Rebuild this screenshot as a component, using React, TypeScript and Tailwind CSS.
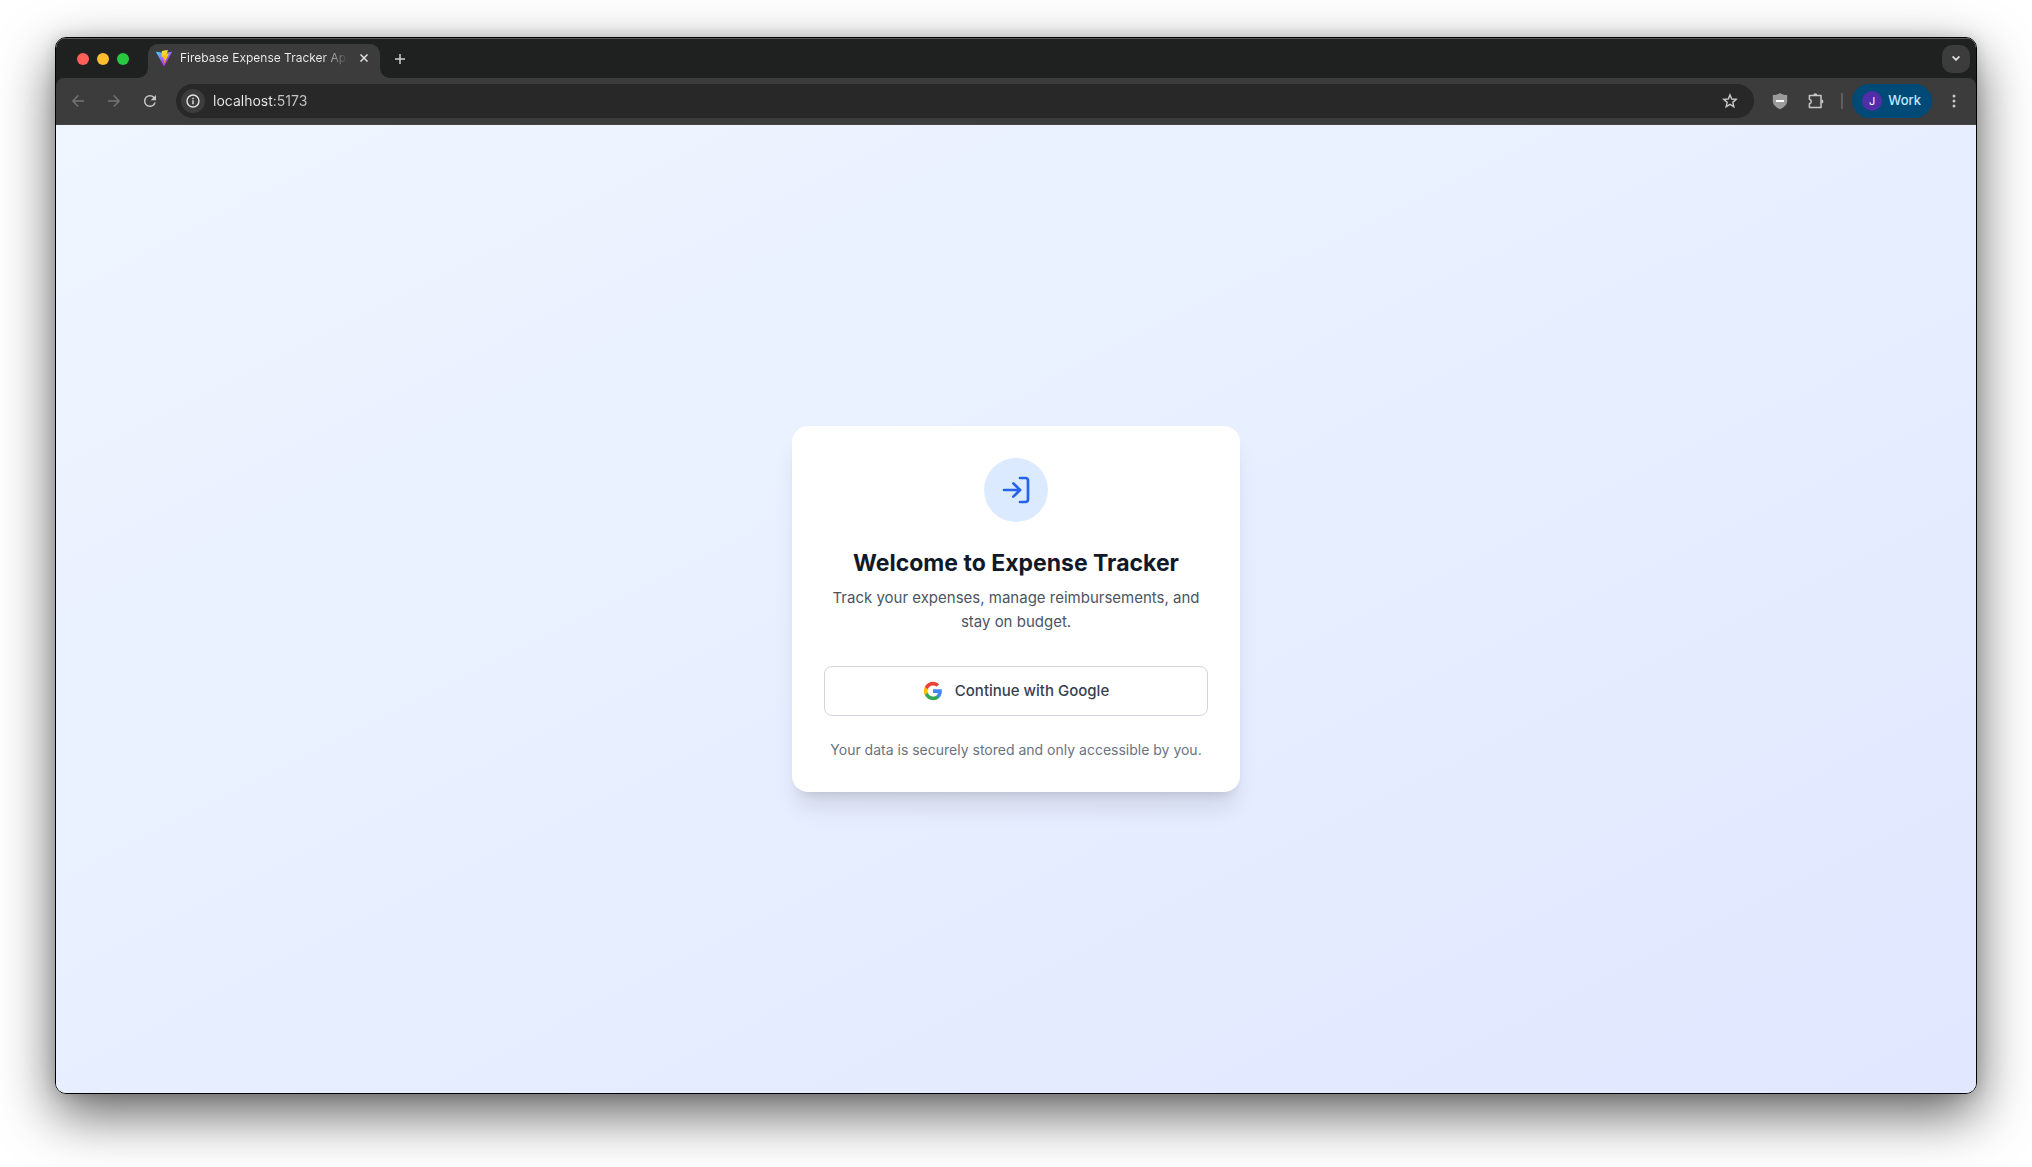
import type { ReactNode } from "react";

function ViteLogo() {
  return (
    <svg viewBox="0 0 256 257" className="size-4 shrink-0" aria-hidden="true">
      <defs>
        <linearGradient id="vite-body" x1="-.828%" x2="57.636%" y1="7.652%" y2="78.411%">
          <stop offset="0%" stopColor="#41D1FF" />
          <stop offset="100%" stopColor="#BD34FE" />
        </linearGradient>
        <linearGradient id="vite-bolt" x1="43.376%" x2="50.316%" y1="2.242%" y2="89.03%">
          <stop offset="0%" stopColor="#FFEA83" />
          <stop offset="8.333%" stopColor="#FFDD35" />
          <stop offset="100%" stopColor="#FFA800" />
        </linearGradient>
      </defs>
      <path
        fill="url(#vite-body)"
        d="M255.153 37.938L134.897 252.976c-2.483 4.44-8.862 4.466-11.382.048L.875 37.958c-2.746-4.814 1.371-10.646 6.827-9.67l120.385 21.517a6.537 6.537 0 0 0 2.322-.004l117.867-21.483c5.438-.991 9.574 4.796 6.877 9.62Z"
      />
      <path
        fill="url(#vite-bolt)"
        d="M185.432.063L96.44 17.501a3.268 3.268 0 0 0-2.634 3.014l-5.474 92.456a3.268 3.268 0 0 0 3.997 3.378l24.777-5.718c2.318-.535 4.413 1.507 3.936 3.838l-7.361 36.047c-.495 2.426 1.782 4.5 4.151 3.78l15.304-4.649c2.372-.72 4.652 1.36 4.15 3.788l-11.698 56.621c-.732 3.542 3.979 5.473 5.943 2.437l1.313-2.028l72.516-144.72c1.215-2.423-.88-5.186-3.54-4.672l-25.505 4.922c-2.396.462-4.435-1.77-3.759-4.114l16.646-57.705c.677-2.35-1.37-4.583-3.769-4.113Z"
      />
    </svg>
  );
}

function GoogleLogo() {
  return (
    <svg viewBox="0 0 24 24" className="size-5 shrink-0" aria-hidden="true">
      <path fill="#4285F4" d="M22.56 12.25c0-.78-.07-1.53-.2-2.25H12v4.26h5.92c-.26 1.37-1.04 2.53-2.21 3.31v2.77h3.57c2.08-1.92 3.28-4.74 3.28-8.09z" />
      <path fill="#34A853" d="M12 23c2.97 0 5.46-.98 7.28-2.66l-3.57-2.77c-.98.66-2.23 1.06-3.71 1.06-2.86 0-5.29-1.93-6.16-4.53H2.18v2.84C3.99 20.53 7.7 23 12 23z" />
      <path fill="#FBBC05" d="M5.84 14.09c-.22-.66-.35-1.36-.35-2.09s.13-1.43.35-2.09V7.07H2.18C1.43 8.55 1 10.22 1 12s.43 3.45 1.18 4.93l2.85-2.22.81-.62z" />
      <path fill="#EA4335" d="M12 5.38c1.62 0 3.06.56 4.21 1.64l3.15-3.15C17.45 2.09 14.97 1 12 1 7.7 1 3.99 3.47 2.18 7.07l3.66 2.84c.87-2.6 3.3-4.53 6.16-4.53z" />
    </svg>
  );
}

function IconButton({ label, className = "", children }: { label: string; className?: string; children: ReactNode }) {
  return (
    <button type="button" aria-label={label} className={`flex size-7 shrink-0 items-center justify-center rounded-full ${className}`}>
      {children}
    </button>
  );
}

function TabStrip() {
  return (
    <div className="flex h-10 items-end border-t border-[#5a5c5b] bg-[#1f2120] pr-1.5">
      <div className="flex h-[39px] w-[92px] shrink-0 items-center gap-2 pl-[21px]">
        <button type="button" aria-label="Close window" className="size-3 rounded-full bg-[#ff5f57]" />
        <button type="button" aria-label="Minimize window" className="size-3 rounded-full bg-[#febc2e]" />
        <button type="button" aria-label="Zoom window" className="size-3 rounded-full bg-[#28c840]" />
      </div>
      <div className="relative flex h-[34px] w-[232px] shrink-0 items-center rounded-t-[10px] bg-[#3c3c3c] pr-2 pb-1.5 pl-2">
        <svg viewBox="0 0 10 10" className="absolute bottom-0 -left-2.5 size-2.5" aria-hidden="true">
          <path fill="#3c3c3c" d="M10 0v10H0A10 10 0 0 0 10 0z" />
        </svg>
        <svg viewBox="0 0 10 10" className="absolute -right-2.5 bottom-0 size-2.5" aria-hidden="true">
          <path fill="#3c3c3c" d="M0 0v10h10A10 10 0 0 1 0 0z" />
        </svg>
        <ViteLogo />
        <span className="ml-2 min-w-0 flex-1 overflow-hidden bg-linear-to-r from-[#f0f0f0] from-85% to-transparent bg-clip-text text-xs leading-4 whitespace-nowrap text-transparent">
          Firebase Expense Tracker App
        </span>
        <button type="button" aria-label="Close tab" className="ml-2 flex size-4 shrink-0 items-center justify-center">
          <svg viewBox="0 0 8 8" className="size-2" stroke="#e3e3e3" strokeWidth="1.5" aria-hidden="true">
            <path d="M.5.5l7 7M7.5.5l-7 7" />
          </svg>
        </button>
      </div>
      <div className="flex h-[39px] flex-1 items-center justify-between pl-1.5">
        <IconButton label="New tab">
          <svg viewBox="0 0 10 10" className="size-2.5" stroke="#d0d0d0" strokeWidth="1.5" aria-hidden="true">
            <path d="M5 0v10M0 5h10" />
          </svg>
        </IconButton>
        <button type="button" aria-label="Search tabs" className="flex size-7 items-center justify-center rounded-[10px] bg-[#3c3c3c]">
          <svg viewBox="0 0 8 5" className="h-[5px] w-2" fill="none" stroke="#e8e8e8" strokeWidth="1.7" aria-hidden="true">
            <path d="M.6.5L4 3.9 7.4.5" />
          </svg>
        </button>
      </div>
    </div>
  );
}

function Toolbar() {
  return (
    <div className="bg-[#1f2120]">
      <div className="flex h-[47px] items-center rounded-t-lg border-b border-[#474444] bg-[#3c3c3c] px-2">
        <div className="flex items-center gap-2">
          <IconButton label="Back">
            <svg viewBox="0 0 12 12" className="size-3" fill="none" stroke="#767676" strokeWidth="1.4" aria-hidden="true">
              <path d="M12 6H1M6.2.6L.9 6l5.3 5.4" />
            </svg>
          </IconButton>
          <IconButton label="Forward">
            <svg viewBox="0 0 12 12" className="size-3" fill="none" stroke="#767676" strokeWidth="1.4" aria-hidden="true">
              <path d="M0 6h11M5.8.6L11.1 6l-5.3 5.4" />
            </svg>
          </IconButton>
          <IconButton label="Reload">
            <svg viewBox="0 0 24 24" className="size-[18px]" fill="#c7c7c7" aria-hidden="true">
              <path d="M17.65 6.35A7.96 7.96 0 0 0 12 4a8 8 0 1 0 7.73 10h-2.08A6 6 0 1 1 12 6c1.66 0 3.14.69 4.22 1.78L13 11h7V4z" />
            </svg>
          </IconButton>
        </div>
        <div className="mx-3 flex h-[34px] min-w-0 flex-1 items-center rounded-full bg-[#282828] pr-2.5 pl-[5px]">
          <button type="button" aria-label="View site information" className="flex size-6 shrink-0 items-center justify-center rounded-full bg-[#3c3c3c]">
            <svg viewBox="0 0 14 14" className="size-3.5" fill="none" stroke="#e3e3e3" strokeWidth="1.4" aria-hidden="true">
              <circle cx="7" cy="7" r="6" />
              <path d="M7 6.2v4M7 3.8v1.4" />
            </svg>
          </button>
          <input
            type="text"
            aria-label="Address and search bar"
            defaultValue="localhost:5173"
            className="ml-2 min-w-0 flex-1 bg-[linear-gradient(to_right,#ececec_61px,#c7c7c7_61px)] bg-clip-text text-sm text-transparent outline-none"
          />
          <IconButton label="Bookmark this tab">
            <svg viewBox="0 0 16 16" className="size-4" fill="none" stroke="#c7c7c7" strokeWidth="1.4" aria-hidden="true">
              <path d="M8 1.9l1.75 4.1 4.45.4-3.4 2.95 1.05 4.35L8 11.4l-3.85 2.3L5.2 9.35 1.8 6.4l4.45-.4z" />
            </svg>
          </IconButton>
        </div>
        <div className="flex items-center gap-2">
          <IconButton label="Content blocker">
            <svg viewBox="0 0 16 18" className="h-[18px] w-4" aria-hidden="true">
              <path fill="#9b9b9b" d="M8 1C6 2.4 3.6 3 .8 3v6c0 3.8 3.2 6.3 7.2 8.2 4-1.900 7.200-4.400 7.200-8.200V3C12.400 3 10 2.400 8 1z" />
              <path fill="#fff" d="M4 8h8v2H4z" />
            </svg>
          </IconButton>
          <IconButton label="Extensions">
            <svg viewBox="0 0 18 18" className="size-[18px]" fill="none" stroke="#c7c7c7" strokeWidth="1.5" strokeLinejoin="round" aria-hidden="true">
              <path d="M2.4 3.6H14v11.8H2.4v-3.6a2.3 2.3 0 0 0 0-4.5z" />
              <path fill="#c7c7c7" stroke="none" d="M6.3 3.2a2 2 0 0 1 4 0zM14.4 7.5a2 2 0 0 1 0 4z" />
            </svg>
          </IconButton>
        </div>
        <div className="mr-[9px] ml-[11px] h-4 w-0.5 bg-[#5e5e5e]" />
        <button type="button" className="flex h-[34px] items-center gap-1.5 rounded-full bg-[#004a77] pr-[11px] pl-2.5 text-[13px] font-medium text-[#c2e7ff]">
          <span className="flex size-5 items-center justify-center rounded-full bg-[#512da8] text-[11px] font-normal text-white">J</span>
          Work
        </button>
        <IconButton label="Browser menu" className="ml-2">
          <svg viewBox="0 0 4 14" className="h-3.5 w-1" fill="#c7c7c7" aria-hidden="true">
            <circle cx="2" cy="2" r="1.5" />
            <circle cx="2" cy="7" r="1.5" />
            <circle cx="2" cy="12" r="1.5" />
          </svg>
        </IconButton>
      </div>
    </div>
  );
}

function SignInCard() {
  return (
    <section className="w-full max-w-md rounded-2xl bg-white p-8 text-center shadow-xl">
      <div className="mx-auto mb-6 flex size-16 items-center justify-center rounded-full bg-[#dbeafe]">
        <svg viewBox="0 0 24 24" className="size-8" fill="none" stroke="#2563eb" strokeWidth="2" strokeLinecap="round" strokeLinejoin="round" aria-hidden="true">
          <path d="M15 3h4a2 2 0 0 1 2 2v14a2 2 0 0 1-2 2h-4" />
          <path d="M10 17l5-5-5-5" />
          <path d="M15 12H3" />
        </svg>
      </div>
      <h1 className="mb-1.5 text-[23px] leading-[34px] font-bold text-[#111827]">Welcome to Expense Tracker</h1>
      <p className="mb-8 text-[15px] leading-6 text-[#4b5563]">
        Track your expenses, manage reimbursements, and stay on budget.
      </p>
      <button
        type="button"
        className="flex w-full items-center justify-center gap-3 rounded-lg border border-[#d1d5db] bg-white px-4 py-3 text-[15px] leading-6 font-medium text-[#374151]"
      >
        <GoogleLogo />
        Continue with Google
      </button>
      <p className="mt-6 text-sm text-[#6b7280]">Your data is securely stored and only accessible by you.</p>
    </section>
  );
}

export default function App() {
  return (
    <div className="flex min-h-screen flex-col bg-white px-[55px] pt-[37px] pb-[73px] font-[Inter,sans-serif]">
      <div className="flex flex-1 flex-col overflow-hidden rounded-[11px] border border-black shadow-[0_20px_54px_rgba(0,0,0,0.62),0_0_14px_rgba(0,0,0,0.15)]">
        <header>
          <TabStrip />
          <Toolbar />
        </header>
        <main className="flex flex-1 items-center justify-center bg-linear-to-br from-[#eff6ff] to-[#e0e7ff]">
          <SignInCard />
        </main>
      </div>
    </div>
  );
}
